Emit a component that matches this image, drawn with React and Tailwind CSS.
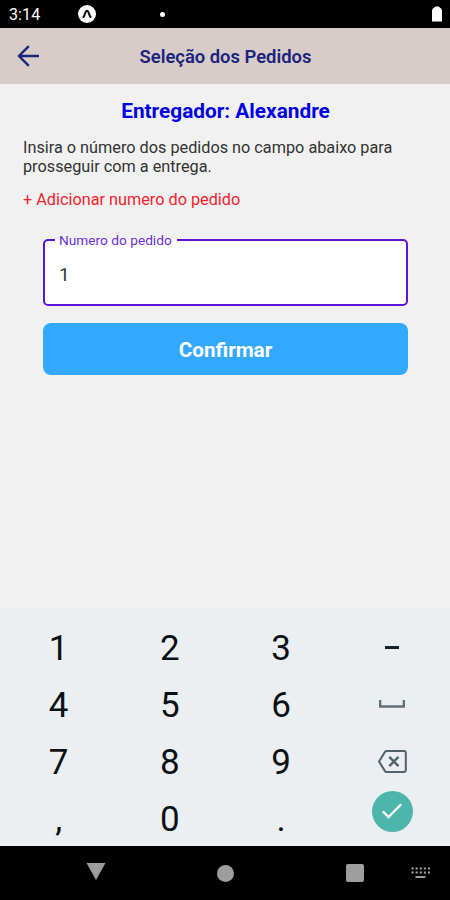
import React, { useState } from 'react';

const KEY_ROWS = [
  ['1', '2', '3', 'minus'],
  ['4', '5', '6', 'space'],
  ['7', '8', '9', 'backspace'],
  [',', '0', '.', 'done'],
];

function StatusBar() {
  return (
    <div className="h-7 bg-black flex items-center text-white">
      <span className="w-[78px] pl-[9px] pt-0.5 text-base leading-none tracking-[0.1px]">3:14</span>
      {/* Expo notification */}
      <svg className="w-[18px] h-[18px]" viewBox="0 0 18 18">
        <circle cx="9" cy="9" r="9" fill="#fff" />
        <path d="M5.4 12 C7 10.5 7.2 5.8 9 5.8 C10.8 5.8 11 10.5 12.6 12" fill="none" stroke="#111" strokeWidth="2" strokeLinecap="round" />
      </svg>
      <span className="ml-16 w-[5px] h-[5px] rounded-full bg-white" />
      <svg className="ml-auto mr-2 w-[10px] h-4" viewBox="0 0 10 16">
        <path d="M3.5 0.5h3L9 2.4 10 4V15.6H0V4L1 2.4z" fill="#fff" />
      </svg>
    </div>
  );
}

function Header() {
  return (
    <header className="h-14 bg-[#d7ccc8] grid grid-cols-[56px_1fr_55px] items-center text-[#1a237e]">
      <button type="button" aria-label="Voltar" className="pl-[17px]">
        <svg className="w-[22px] h-[22px]" viewBox="0 0 22 22" fill="none" stroke="currentColor" strokeWidth="2.4">
          <path d="M22 11H2.2M11.8 1.2L2 11l9.8 9.8" />
        </svg>
      </button>
      <h1 className="text-center text-[18.4px] font-semibold leading-none pt-0.5 whitespace-nowrap">Seleção dos Pedidos</h1>
    </header>
  );
}

function KeyFace({ name }) {
  switch (name) {
    case 'minus':
      return <span className="w-[14px] h-[3px] bg-[#16222b]" />;
    case 'space':
      return (
        <svg className="w-[26px] h-2" viewBox="0 0 26 8" fill="none" stroke="#5f7078" strokeWidth="2.4">
          <path d="M1.1 0v6.5h23.8V0" />
        </svg>
      );
    case 'backspace':
      return (
        <svg className="w-[29px] h-[23px]" viewBox="0 0 29 23" fill="none" stroke="#536169" strokeWidth="2">
          <path d="M8.6 1H26a1.8 1.8 0 0 1 1.8 1.8v17.4A1.8 1.8 0 0 1 26 22H8.6a2 2 0 0 1-1.6-.9L1 11.5 7 1.9A2 2 0 0 1 8.6 1z" />
          <path d="M11.3 6.8l9.2 9.4M20.5 6.8l-9.2 9.4" strokeWidth="2.4" />
        </svg>
      );
    case 'done':
      return (
        <span className="w-[41px] h-[41px] mb-[15px] rounded-full bg-[#4db6ac] flex items-center justify-center">
          <svg className="w-5 h-4" viewBox="0 0 20 16" fill="none" stroke="#fff" strokeWidth="2.3">
            <path d="M0.8 8.3l5.7 5.7L19.2 1.2" />
          </svg>
        </span>
      );
    default:
      return <span className="pt-0.5">{name}</span>;
  }
}

function Keypad({ onPress }) {
  return (
    <div className="h-[238px] bg-[#eceff1] pt-[10.5px] pl-[3px] pr-[2px] grid grid-cols-4 grid-rows-[57.2px_57.2px_57.2px_57.2px] overflow-hidden text-[#0b1216]">
      {KEY_ROWS.flat().map((key) => (
        <button
          key={key}
          type="button"
          aria-label={key}
          onClick={() => onPress(key)}
          className="flex items-center justify-center text-[35px] leading-none"
        >
          <KeyFace name={key} />
        </button>
      ))}
    </div>
  );
}

function NavBar() {
  return (
    <div className="h-[54px] bg-black flex items-center text-[#9e9e9e]">
      <svg className="ml-[86px] mb-[3px] w-5 h-[17px]" viewBox="0 0 20 17">
        <path d="M0.5 0h19L10 17z" fill="currentColor" />
      </svg>
      <span className="ml-[111px] w-[17px] h-[17px] rounded-full bg-[#9e9e9e]" />
      <span className="ml-[112px] w-[18px] h-[18px] rounded-xs bg-[#9e9e9e]" />
      <svg className="ml-[47px] w-[19px] h-3" viewBox="0 0 19 12" fill="none" stroke="currentColor">
        <path d="M0.5 1.5H19M0.5 5.5H19" strokeWidth="2" strokeDasharray="2.2 1.9" />
        <path d="M4.5 10h10" strokeWidth="2" />
      </svg>
    </div>
  );
}

export default function App() {
  const [order, setOrder] = useState('1');

  const handlePress = (key) => {
    if (key === 'backspace') {
      setOrder(order.slice(0, -1));
    } else if (key.length === 1) {
      setOrder(order + key);
    }
  };

  return (
    <div className="w-[450px] h-[900px] flex flex-col overflow-hidden bg-[#f1f1f1] font-[Roboto,sans-serif]">
      <StatusBar />
      <Header />

      <main className="flex-1 pt-4">
        <h2 className="pl-px text-center text-[20.8px] leading-[22px] font-bold text-[#0000e6]">Entregador: Alexandre</h2>
        <p className="mt-4 pl-[23px] text-[16.25px] leading-[19px] text-[#333] whitespace-nowrap">
          Insira o número dos pedidos no campo abaixo para
          <br />
          prosseguir com a entrega.
        </p>
        <button type="button" className="block mt-[14px] ml-[23px] text-[16.25px] leading-5 text-[#f5222d] whitespace-nowrap">
          + Adicionar numero do pedido
        </button>

        {/* Outlined input, the legend cuts the border */}
        <fieldset className="mt-[22px] ml-[43px] mr-[42px] h-[74px] min-w-0 border-[2.5px] border-[#5b14d8] rounded-[5px] bg-white px-[10px]">
          <legend className="pl-1 pr-[5px] text-[13.7px] leading-4 text-[#6a2ee0] whitespace-nowrap">Numero do pedido</legend>
          <input
            value={order}
            onChange={(e) => setOrder(e.target.value)}
            className="block w-full h-[52px] px-1 text-[19px] text-[#333] outline-none"
          />
        </fieldset>

        <button
          type="button"
          className="block mt-[17px] ml-[43px] w-[365px] h-[52px] pt-[3px] rounded-lg bg-[#33a8ff] text-[20.7px] font-bold text-white"
        >
          Confirmar
        </button>
      </main>

      <Keypad onPress={handlePress} />
      <NavBar />
    </div>
  );
}
